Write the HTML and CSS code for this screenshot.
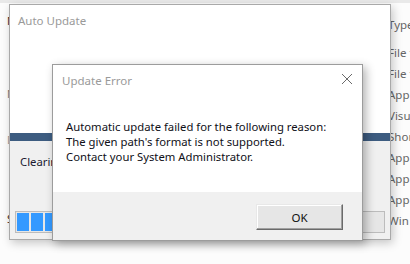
FILE: index.html
```html
<!DOCTYPE html>
<html>
<head>
<meta charset="utf-8">
<link rel="stylesheet" href="styles.css">
</head>
<body>
<div class="desk">
  <div class="bg-top"></div>
  <ul class="bg-list bg-left">
    <li class="l1">N</li>
    <li class="l2">N</li>
    <li class="l3">D</li>
    <li class="l4">S</li>
  </ul>
  <ul class="bg-list bg-right">
    <li class="head">Type</li>
    <li>File f</li>
    <li>File f</li>
    <li>App</li>
    <li>Visu</li>
    <li>Shor</li>
    <li>App</li>
    <li>App</li>
    <li>App</li>
    <li>Win</li>
  </ul>

  <div class="win main">
    <div class="main-top">
      <div class="title">Auto Update</div>
    </div>
    <div class="main-bar"></div>
    <div class="main-status">
      <div class="status-text">Clearing</div>
      <div class="progress">
        <span class="block"></span><span class="block"></span><span class="block"></span><span class="block"></span><span class="block"></span>
      </div>
    </div>
  </div>

  <div class="win dialog">
    <div class="dlg-head">
      <span class="title">Update Error</span>
      <svg class="close" width="12" height="12" viewBox="0 0 12 12"><path d="M1 1 L11 11 M11 1 L1 11" stroke="#6a6a6a" stroke-width="1" fill="none"/></svg>
    </div>
    <div class="dlg-msg">
      <p>Automatic update failed for the following reason:</p>
      <p>The given path's format is not supported.</p>
      <p>Contact your System Administrator.</p>
    </div>
    <div class="dlg-foot">
      <button class="btn">OK</button>
    </div>
  </div>
</div>
</body>
</html>
```
FILE: styles.css
```css
* { box-sizing: border-box; }
html, body { margin: 0; padding: 0; background: #fff; }
.desk {
  position: relative;
  width: 410px;
  height: 264px;
  overflow: hidden;
  background: #fcfcfc;
  font-family: "Noto Sans", "Open Sans", sans-serif;
  font-size: 11.3px;
}
.bg-top {
  height: 3px;
  background: #e9e9e9;
}
.bg-list {
  position: absolute;
  margin: 0;
  padding: 0;
  list-style: none;
  color: #555;
  white-space: nowrap;
}
.bg-left { left: 7px; top: 0; color: #3a2a2a; }
.bg-left li { position: absolute; left: 0; line-height: 14px; }
.bg-left .l1 { top: 14px; }
.bg-left .l2 { top: 87px; color: #777; }
.bg-left .l3 { top: 133px; color: #999; }
.bg-left .l4 { top: 212px; }
.bg-right { left: 388px; top: 14px; color: #666; font-size: 11.5px; }
.bg-right li { line-height: 21px; }
.bg-right .head { margin-bottom: 7px; }

.win {
  position: absolute;
  display: flex;
  flex-direction: column;
}
.title {
  color: #9a9a9a;
  font-size: 11.5px;
}

.main {
  left: 9px;
  top: 4px;
  width: 382px;
  height: 236px;
  border: 1px solid #a9a9a9;
  background: #fff;
  box-shadow: 2px 3px 9px rgba(0,0,0,0.22);
}
.main-top {
  height: 128px;
  background: #fff;
  padding: 8px 0 0 8px;
}
.main-bar {
  height: 8px;
  background: #3d5c80;
}
.main-status {
  flex: 1;
  background: #f0f0f0;
  padding: 13px 5px 0 5px;
  display: flex;
  flex-direction: column;
}
.status-text {
  padding-left: 5px;
  color: #1a1a30;
  line-height: 16px;
  height: 57px;
}
.progress {
  height: 22px;
  border: 1px solid #bcbcbc;
  background: #e6e6e6;
  display: flex;
  gap: 2px;
  padding: 1px 1px;
}
.block {
  width: 12px;
  background: #3399ff;
}

.dialog {
  left: 52px;
  top: 64px;
  width: 311px;
  height: 177px;
  border: 1px solid #9c9c9c;
  background: #fff;
  box-shadow: 3px 3px 9px rgba(0,0,0,0.3);
}
.dlg-head {
  height: 30px;
  display: flex;
  align-items: center;
  justify-content: space-between;
  padding: 0 9px 0 9px;
}
.close { display: block; margin-top: -2px; }
.dlg-msg {
  flex: 1;
  padding: 24px 0 0 13px;
  color: #101018;
}
.dlg-msg p {
  margin: 0;
  line-height: 15px;
  white-space: nowrap;
}
.dlg-foot {
  height: 48px;
  background: #f0f0f0;
  display: flex;
  justify-content: flex-end;
  align-items: flex-start;
  padding: 12px 19px 0 0;
}
.btn {
  width: 87px;
  height: 26px;
  margin: 0;
  padding: 0;
  font-family: inherit;
  font-size: 11.5px;
  color: #111;
  background: #e6e6e6;
  border: 1px solid;
  border-color: #e8e8e8 #6a6a6a #6a6a6a #e8e8e8;
  box-shadow: inset -1px -1px 0 #a0a0a0, inset 1px 1px 0 #fff;
}
```
